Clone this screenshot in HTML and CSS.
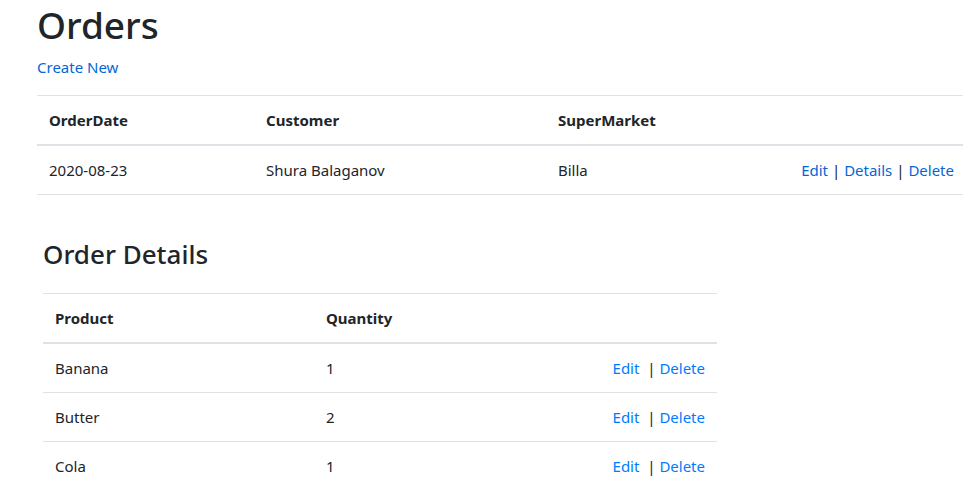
FILE: index.html
```html
<!DOCTYPE html>
<html lang="en">
<head>
<meta charset="utf-8">
<title>Orders</title>
<link rel="stylesheet" href="styles.css">
</head>
<body>
<main class="page">
  <h1 class="title">Orders</h1>
  <p class="create"><a href="#">Create New</a></p>
  <table class="table table-orders">
    <thead>
      <tr>
        <th class="col-date">OrderDate</th>
        <th class="col-customer">Customer</th>
        <th class="col-market">SuperMarket</th>
        <th></th>
      </tr>
    </thead>
    <tbody>
      <tr>
        <td>2020-08-23</td>
        <td>Shura Balaganov</td>
        <td>Billa</td>
        <td class="actions"><a href="#">Edit</a> | <a href="#">Details</a> | <a href="#">Delete</a></td>
      </tr>
    </tbody>
  </table>

  <section class="details">
    <h3 class="subtitle">Order Details</h3>
    <table class="table table-details">
      <thead>
        <tr>
          <th class="col-product">Product</th>
          <th class="col-qty">Quantity</th>
          <th></th>
        </tr>
      </thead>
      <tbody>
        <tr>
          <td>Banana</td>
          <td>1</td>
          <td class="actions"><a href="#">Edit</a>&nbsp; | <a href="#">Delete</a></td>
        </tr>
        <tr>
          <td>Butter</td>
          <td>2</td>
          <td class="actions"><a href="#">Edit</a>&nbsp; | <a href="#">Delete</a></td>
        </tr>
        <tr>
          <td>Cola</td>
          <td>1</td>
          <td class="actions"><a href="#">Edit</a>&nbsp; | <a href="#">Delete</a></td>
        </tr>
      </tbody>
    </table>
  </section>
</main>
</body>
</html>
```

FILE: styles.css
```css
html, body {
  margin: 0;
  padding: 0;
  background: #ffffff;
}

body {
  font-family: "Segoe UI", "Noto Sans", "Open Sans", sans-serif;
  font-size: 15px;
  line-height: 24px;
  color: #212529;
  overflow: hidden;
}

a {
  color: #0366d6;
  text-decoration: none;
}

.page {
  padding: 0 0 0 37px;
}

.title {
  font-size: 37px;
  font-weight: 500;
  line-height: 48px;
  margin: 0 0 6px;
  padding-top: 1px;
}

.create {
  margin: 0 0 16px;
}

.table {
  border-collapse: collapse;
  margin-bottom: 16px;
}

.table th,
.table td {
  padding: 12px;
  text-align: left;
  vertical-align: top;
  border-top: 1px solid #dee2e6;
}

.table th {
  font-weight: 700;
}

.table thead th {
  border-bottom: 2px solid #dee2e6;
}

.table tbody tr:last-child td {
  border-bottom: 1px solid #dee2e6;
}

.table-details tbody tr:last-child td {
  border-bottom: none;
}

.table-orders {
  width: 929px;
}

.table-orders .col-date { width: 193px; }
.table-orders .col-customer { width: 268px; }
.table-orders .col-market { width: 200px; }

.actions {
  text-align: right !important;
  white-space: nowrap;
}

.details {
  padding: 26px 0 0 6px;
}

.subtitle {
  font-size: 26px;
  font-weight: 500;
  line-height: 34px;
  margin: 0 0 22px;
}

.table-details {
  width: 674px;
}

.table-details .col-product { width: 247px; }
.table-details .col-qty { width: 200px; }

.table-details a {
  color: #007bff;
}
```
